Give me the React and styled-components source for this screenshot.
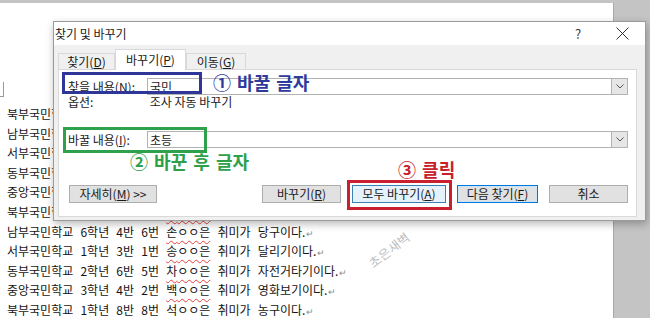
import React from "react";
import styled, { createGlobalStyle } from "styled-components";

const GlobalStyle = createGlobalStyle`
  html, body { margin: 0; padding: 0; background: #fff; }
  body { font-family: "Noto Sans CJK KR", "Noto Sans", sans-serif; }
  * { box-sizing: border-box; }
`;

const Screen = styled.div`
  position: relative;
  width: 650px;
  height: 318px;
  overflow: hidden;
  display: flex;
  padding-top: 3px;
  background: #c4c4c4;
`;

const Page = styled.div`
  width: 614px;
  background: #fff;
  border-right: 1px solid #a9a9a9;
  padding: 101px 0 0 7px;
  display: flex;
  flex-direction: column;
`;

const DocLine = styled.div`
  height: 19.6px;
  line-height: 19.6px;
  font-size: 12px;
  letter-spacing: 0;
  word-spacing: 4.5px;
  color: #141414;
  white-space: nowrap;
`;

const Typo = styled.span`
  text-decoration: underline wavy #e0403c;
  text-decoration-thickness: 1px;
  text-underline-offset: 3px;
  text-decoration-skip-ink: none;
`;

const ReturnMark = styled.span`
  font-size: 9px;
  color: #8c8c8c;
  margin-left: 1px;
`;

const CornerMark = styled.div`
  position: absolute;
  left: 0;
  top: 82px;
  width: 4px;
  height: 15px;
  border-right: 1px solid #9a9a9a;
  border-bottom: 1px solid #9a9a9a;
`;

const Watermark = styled.div`
  position: absolute;
  left: 365px;
  top: 240px;
  font-size: 12.5px;
  color: #bcbcbc;
  transform: rotate(-38deg);
  letter-spacing: 0.5px;
`;

const Dialog = styled.div`
  position: absolute;
  left: 53px;
  top: 21px;
  width: 593px;
  height: 200px;
  background: #f0f0f0;
  border: 1px solid #9b9b9b;
  box-shadow: 1px 3px 8px rgba(0, 0, 0, 0.28);
  display: flex;
  flex-direction: column;
  font-size: 12px;
  color: #1a1a1a;
`;

const TitleBar = styled.div`
  height: 23px;
  background: #fff;
  display: flex;
  align-items: center;
  padding-left: 1px;
`;

const Title = styled.div`
  flex: 1;
  font-size: 12px;
  line-height: 1;
`;

const CaptionButton = styled.div`
  width: ${(p) => p.$w}px;
  height: 23px;
  margin-right: ${(p) => p.$gap || 0}px;
  display: flex;
  align-items: center;
  justify-content: center;
  font-size: 13px;
  color: #3a3a3a;
`;

const Body = styled.div`
  flex: 1;
  display: flex;
  flex-direction: column;
  padding: 4px 8px 3px 4px;
`;

const Tabs = styled.div`
  height: 21px;
  display: flex;
  align-items: flex-end;
  margin-bottom: -1px;
  position: relative;
  z-index: 1;
`;

const Tab = styled.div`
  width: ${(p) => p.$w}px;
  height: ${(p) => (p.$active ? 21 : 16)}px;
  margin-bottom: ${(p) => (p.$active ? 0 : 1)}px;
  background: ${(p) => (p.$active ? "#fff" : "#f0f0f0")};
  border: 1px solid #d9d9d9;
  border-bottom: none;
  display: flex;
  align-items: center;
  justify-content: center;
  font-size: 12px;
  line-height: 1;
  color: #1a1a1a;
`;

const Panel = styled.div`
  flex: 1;
  background: #fff;
  border: 1px solid #d9d9d9;
  padding: 8px 8px 0 9px;
  display: flex;
  flex-direction: column;
`;

const FieldRow = styled.div`
  display: grid;
  grid-template-columns: 79px 1fr;
  align-items: center;
  height: ${(p) => p.$h}px;
  margin-top: ${(p) => p.$mt || 0}px;
  font-size: 12px;
  line-height: 1;
`;

const Combo = styled.div`
  height: 17px;
  border: 1px solid #b3b3b3;
  display: flex;
  align-items: center;
  padding-left: 2px;
`;

const ComboValue = styled.div`
  flex: 1;
  font-size: 12px;
  line-height: 1;
`;

const DropButton = styled.div`
  width: 16px;
  height: 15px;
  background: #e6e6e6;
  border-left: 1px solid #b3b3b3;
  display: flex;
  align-items: center;
  justify-content: center;
`;

const ButtonRow = styled.div`
  display: flex;
  margin-top: 37px;
  height: 18px;
`;

const ButtonGroup = styled.div`
  margin-left: auto;
  display: flex;
  gap: 11px;
`;

const Button = styled.div`
  width: ${(p) => p.$w}px;
  height: 18px;
  margin-left: ${(p) => p.$ml || 0}px;
  background: ${(p) => (p.$focus ? "#e5f1fb" : "#e1e1e1")};
  border: 1px solid ${(p) => (p.$primary ? "#0078d7" : p.$focus ? "#3c7fb1" : "#adadad")};
  box-shadow: ${(p) => (p.$primary ? "inset 0 0 0 1px #cce4f7" : "none")};
  display: flex;
  align-items: center;
  justify-content: center;
  font-size: 12px;
  line-height: 1;
  color: #1a1a1a;
`;

const MarkBox = styled.div`
  position: absolute;
  left: ${(p) => p.$x}px;
  top: ${(p) => p.$y}px;
  width: ${(p) => p.$w}px;
  height: ${(p) => p.$h}px;
  border: 3px solid ${(p) => p.$c};
`;

const MarkLabel = styled.div`
  position: absolute;
  left: ${(p) => p.$x}px;
  top: ${(p) => p.$y}px;
  font-size: 18px;
  font-weight: 700;
  line-height: 1;
  word-spacing: 2px;
  color: ${(p) => p.$c};
  white-space: nowrap;
`;

const Chevron = () => (
  <svg width="8" height="5" viewBox="0 0 8 5">
    <path d="M0.5 0.5 L4 4 L7.5 0.5" fill="none" stroke="#555" strokeWidth="1" />
  </svg>
);

const CloseIcon = () => (
  <svg width="13" height="13" viewBox="0 0 13 13">
    <path d="M0.5 0.5 L12.5 12.5 M12.5 0.5 L0.5 12.5" stroke="#333" strokeWidth="1" />
  </svg>
);

const lines = [
  { head: "북부국민학교 5학년 2반 3번", name: "김", tail: "취미가 독서이다." },
  { head: "남부국민학교 3학년 1반 7번", name: "이", tail: "취미가 수영이다." },
  { head: "서부국민학교 4학년 5반 2번", name: "박", tail: "취미가 축구이다." },
  { head: "동부국민학교 6학년 2반 4번", name: "최", tail: "취미가 그림그리기이다." },
  { head: "중앙국민학교 2학년 3반 9번", name: "정", tail: "취미가 피아노이다." },
  { head: "북부국민학교 5학년 7반 1번", name: "강", tail: "취미가 야구이다." },
  { head: "남부국민학교 6학년 4반 6번", name: "손", tail: "취미가 당구이다." },
  { head: "서부국민학교 1학년 3반 1번", name: "송", tail: "취미가 달리기이다." },
  { head: "동부국민학교 2학년 6반 5번", name: "차", tail: "취미가 자전거타기이다." },
  { head: "중앙국민학교 3학년 4반 2번", name: "백", tail: "취미가 영화보기이다." },
  { head: "북부국민학교 1학년 8반 8번", name: "석", tail: "취미가 농구이다." },
];

export default function App() {
  return (
    <Screen>
      <GlobalStyle />
      <Page>
        {lines.map((l, i) => (
          <DocLine key={i}>
            {l.head} <Typo>{l.name}ㅇㅇ은</Typo> {l.tail}
            <ReturnMark>↵</ReturnMark>
          </DocLine>
        ))}
      </Page>
      <CornerMark />
      <Watermark>초은새벽</Watermark>

      <Dialog>
        <TitleBar>
          <Title>찾기 및 바꾸기</Title>
          <CaptionButton $w={30} $gap={7}>?</CaptionButton>
          <CaptionButton $w={45}>
            <CloseIcon />
          </CaptionButton>
        </TitleBar>
        <Body>
          <Tabs>
            <Tab $w={57}>찾기(<u>D</u>)</Tab>
            <Tab $w={71} $active>바꾸기(<u>P</u>)</Tab>
            <Tab $w={60}>이동(<u>G</u>)</Tab>
          </Tabs>
          <Panel>
            <FieldRow $h={17}>
              <span>찾을 내용(<u>N</u>):</span>
              <Combo>
                <ComboValue>국민</ComboValue>
                <DropButton><Chevron /></DropButton>
              </Combo>
            </FieldRow>
            <FieldRow $h={13}>
              <span>옵션:</span>
              <span>&nbsp;조사 자동 바꾸기</span>
            </FieldRow>
            <FieldRow $h={17} $mt={23}>
              <span>바꿀 내용(<u>I</u>):</span>
              <Combo>
                <ComboValue>초등</ComboValue>
                <DropButton><Chevron /></DropButton>
              </Combo>
            </FieldRow>
            <ButtonRow>
              <Button $w={88} $ml={1}>자세히(<u>M</u>) &gt;&gt;</Button>
              <ButtonGroup>
                <Button $w={79}>바꾸기(<u>R</u>)</Button>
                <Button $w={94} $focus>모두 바꾸기(<u>A</u>)</Button>
                <Button $w={81} $primary>다음 찾기(<u>F</u>)</Button>
                <Button $w={79}>취소</Button>
              </ButtonGroup>
            </ButtonRow>
          </Panel>
        </Body>
      </Dialog>

      <MarkBox $x={62} $y={72} $w={140} $h={22} $c="#2f3699" />
      <MarkLabel $x={213} $y={73} $c="#2f3b9c">① 바꿀 글자</MarkLabel>
      <MarkBox $x={63} $y={127} $w={144} $h={26} $c="#2fa04b" />
      <MarkLabel $x={130} $y={152} $c="#2ea04a">② 바꾼 후 글자</MarkLabel>
      <MarkBox $x={347} $y={180} $w={105} $h={30} $c="#c8202f" />
      <MarkLabel $x={398} $y={160} $c="#c8202a">③ 클릭</MarkLabel>
    </Screen>
  );
}
